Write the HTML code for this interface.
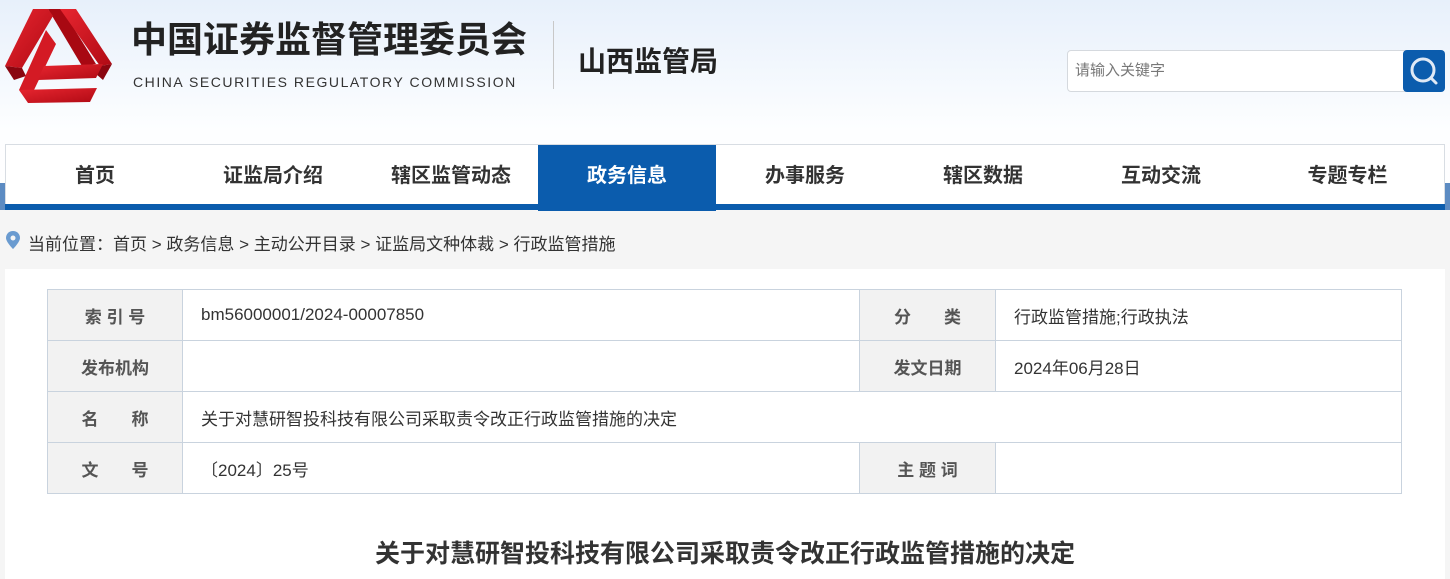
<!DOCTYPE html>
<html><head><meta charset="utf-8"><style>
*{margin:0;padding:0;box-sizing:border-box}
body{width:1450px;height:573px;overflow:hidden;position:relative;font-family:"Liberation Sans","Noto Sans CJK SC",sans-serif;background:#f5f5f5;color:#333}
.hdr{position:absolute;left:0;top:0;width:1450px;height:210px;background:linear-gradient(#e7f0fb,#fdfeff 130px,#fff)}
.abs{position:absolute}
.band{position:absolute;left:0;top:183px;width:1450px;height:27px;background:#5c8bc2}
.nav{position:absolute;left:5px;top:144px;width:1440px;height:66px;background:#fff;border:1px solid #d8dde3;border-bottom:none}
.nav .bar{position:absolute;left:-1px;right:-1px;bottom:0;height:6px;background:#0b5cad}
.nav a{position:absolute;top:0;height:60px;line-height:62px;font-size:20px;font-weight:bold;color:#333;text-align:center;text-decoration:none}
.nav a.on{background:#0b5cad;color:#fff;height:66px}
table{position:absolute;left:47px;top:289px;width:1355px;border-collapse:collapse;font-size:17px}
td{border:1px solid #c9d3de;height:51px;padding:0 0 0 18px;color:#333}
td.l{background:#f2f2f2;font-weight:bold;color:#555;text-align:center;padding:0;width:135px}
</style></head><body>
<div class="hdr"></div>
<svg class="abs" style="left:0;top:0" width="120" height="110" viewBox="0 0 120 110">
<defs><linearGradient id="g" x1="0" y1="0" x2="1" y2="1"><stop offset="0" stop-color="#e82630"/><stop offset="1" stop-color="#b00a14"/></linearGradient></defs>
<polygon points="48,9 62,9 96,64 82,66" fill="#a80812"/>
<polygon points="33,9 48,9 53,16 22,68 5,66" fill="url(#g)"/>
<polygon points="5,66 22,68 26,76 14,80" fill="#8a0610"/>
<polygon points="60,9 76,9 112,64 100,66" fill="url(#g)"/>
<polygon points="100,66 112,64 103,80 96,74" fill="#8a0610"/>
<polygon points="46,30 56,44 34,90 19,90" fill="#d41a24"/>
<polygon points="44,66 103,64 96,78 38,80" fill="url(#g)"/>
<polygon points="19,90 97,88 90,102 28,103" fill="url(#g)"/>
</svg>
<div class="abs" style="left:131px;top:18px;font-size:36px;font-weight:bold;color:#222;line-height:44px;white-space:nowrap">中国证券监督管理委员会</div>
<div class="abs" style="left:133px;top:74px;font-size:14px;color:#333;letter-spacing:1.55px;white-space:nowrap">CHINA SECURITIES REGULATORY COMMISSION</div>
<div class="abs" style="left:553px;top:21px;width:1px;height:68px;background:#c8c8c8"></div>
<div class="abs" style="left:578px;top:40px;font-size:28px;font-weight:bold;color:#222">山西监管局</div>
<div class="abs" style="left:1067px;top:50px;width:340px;height:42px;background:#fff;border:1px solid #d5d9de;border-radius:4px 0 0 4px;font-size:15px;color:#777;line-height:40px;padding-left:7px">请输入关键字</div>
<div class="abs" style="left:1403px;top:50px;width:42px;height:42px;background:#0b5cad;border-radius:4px">
<svg width="42" height="42"><circle cx="20" cy="20" r="11" fill="none" stroke="#dfe9f5" stroke-width="3"/><line x1="28" y1="28" x2="33" y2="33" stroke="#dfe9f5" stroke-width="3" stroke-linecap="round"/></svg></div>
<div class="band"></div>
<div class="nav"><div class="bar"></div>
<a style="left:0;width:178px">首页</a>
<a style="left:178px;width:178px">证监局介绍</a>
<a style="left:356px;width:178px">辖区监管动态</a>
<a class="on" style="left:532px;width:178px">政务信息</a>
<a style="left:710px;width:178px">办事服务</a>
<a style="left:888px;width:178px">辖区数据</a>
<a style="left:1066px;width:178px">互动交流</a>
<a style="left:1244px;width:195px">专题专栏</a>
</div>
<svg class="abs" style="left:6px;top:231px" width="14" height="18" viewBox="0 0 14 18"><path d="M7 0C3 0 0 3 0 7c0 4 7 11 7 11s7-7 7-11c0-4-3-7-7-7z" fill="#6a9bd0"/><circle cx="7" cy="7" r="2.5" fill="#f5f5f5"/></svg>
<div class="abs" style="left:28px;top:230px;font-size:17px;color:#333;white-space:nowrap">当前位置：首页 &gt; 政务信息 &gt; 主动公开目录 &gt; 证监局文种体裁 &gt; 行政监管措施</div>
<div class="abs" style="left:5px;top:269px;width:1440px;height:310px;background:#fff"></div>
<table>
<tr><td class="l">索 引 号</td><td style="width:677px">bm56000001/2024-00007850</td><td class="l" style="width:136px">分&nbsp;&nbsp;&nbsp;&nbsp;&nbsp;&nbsp;&nbsp;类</td><td>行政监管措施;行政执法</td></tr>
<tr><td class="l">发布机构</td><td></td><td class="l">发文日期</td><td>2024年06月28日</td></tr>
<tr><td class="l">名&nbsp;&nbsp;&nbsp;&nbsp;&nbsp;&nbsp;&nbsp;称</td><td colspan="3">关于对慧研智投科技有限公司采取责令改正行政监管措施的决定</td></tr>
<tr><td class="l">文&nbsp;&nbsp;&nbsp;&nbsp;&nbsp;&nbsp;&nbsp;号</td><td>〔2024〕25号</td><td class="l">主 题 词</td><td></td></tr>
</table>
<div class="abs" style="left:0;width:1450px;top:534px;text-align:center;font-size:25px;font-weight:bold;color:#333">关于对慧研智投科技有限公司采取责令改正行政监管措施的决定</div>
</body></html>
